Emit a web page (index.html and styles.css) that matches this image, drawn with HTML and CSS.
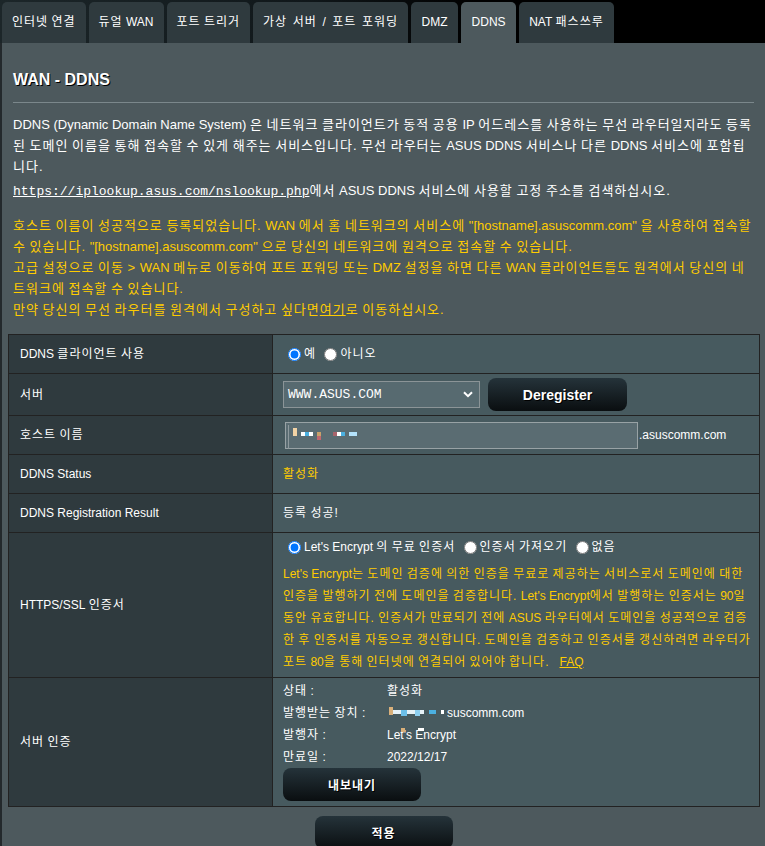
FILE: index.html
```html
<!DOCTYPE html>
<html lang="ko">
<head>
<meta charset="utf-8">
<title>WAN - DDNS</title>
<link rel="stylesheet" href="styles.css">
</head>
<body>
<div class="page">
  <nav class="tabs">
    <div class="tab">인터넷 연결</div>
    <div class="tab">듀얼 <span class="en">WAN</span></div>
    <div class="tab">포트 트리거</div>
    <div class="tab tab-wide">가상 서버 / 포트 포워딩</div>
    <div class="tab en">DMZ</div>
    <div class="tab en active">DDNS</div>
    <div class="tab"><span class="en">NAT</span> 패스쓰루</div>
  </nav>
  <main class="panel">
    <div class="intro">
      <h1 class="title en">WAN - DDNS</h1>
      <div class="split"></div>
      <p class="desc"><span class="en">DDNS (Dynamic Domain Name System)</span> 은 네트워크 클라이언트가 동적 공용 <span class="en">IP</span> 어드레스를 사용하는 무선 라우터일지라도 등록된 도메인 이름을 통해 접속할 수 있게 해주는 서비스입니다. 무선 라우터는 <span class="en">ASUS DDNS</span> 서비스나 다른 <span class="en">DDNS</span> 서비스에 포함됩니다.</p>
      <p class="desc link-line"><a class="mono-link en">https://iplookup.asus.com/nslookup.php</a>에서 <span class="en">ASUS DDNS</span> 서비스에 사용할 고정 주소를 검색하십시오.</p>
      <p class="hint">호스트 이름이 성공적으로 등록되었습니다. <span class="en">WAN</span> 에서 홈 네트워크의 서비스에 <span class="en">"[hostname].asuscomm.com"</span> 을 사용하여 접속할 수 있습니다. <span class="en">"[hostname].asuscomm.com"</span> 으로 당신의 네트워크에 원격으로 접속할 수 있습니다.<br>고급 설정으로 이동 &gt; <span class="en">WAN</span> 메뉴로 이동하여 포트 포워딩 또는 <span class="en">DMZ</span> 설정을 하면 다른 <span class="en">WAN</span> 클라이언트들도 원격에서 당신의 네트워크에 접속할 수 있습니다.<br>만약 당신의 무선 라우터를 원격에서 구성하고 싶다면<a class="u">여기</a>로 이동하십시오.</p>
    </div>

    <div class="form">
      <div class="th"><span class="en">DDNS</span>&nbsp;클라이언트 사용</div>
      <div class="td"><span class="radios"><input type="radio" name="ddns" checked>예 <input type="radio" name="ddns">아니오</span></div>

      <div class="th">서버</div>
      <div class="td">
        <div class="select en"><span>WWW.ASUS.COM</span><svg width="10" height="7" viewBox="0 0 10 7"><path d="M1 1.2 L5 5.2 L9 1.2" fill="none" stroke="#fff" stroke-width="2"/></svg></div>
        <button class="btn btn-dereg">Deregister</button>
      </div>

      <div class="th">호스트 이름</div>
      <div class="td">
        <div class="host">
          <i class="px line"></i>
          <i class="px p1"></i>
          <i class="px p2"></i><i class="px p3"></i><i class="px p4"></i>
          <i class="px p5"></i><i class="px p6"></i>
          <i class="px p7"></i><i class="px p8"></i><i class="px p9"></i>
          <i class="px p10"></i>
        </div><span class="suffix en">.asuscomm.com</span>
      </div>

      <div class="th en">DDNS Status</div>
      <div class="td"><span class="orange">활성화</span></div>

      <div class="th en">DDNS Registration Result</div>
      <div class="td">등록 성공!</div>

      <div class="th"><span class="en">HTTPS/SSL</span>&nbsp;인증서</div>
      <div class="td td-block td-https">
        <div class="radios radio-line"><input type="radio" name="cert" checked><span class="en">Let's Encrypt</span> 의 무료 인증서 <input type="radio" name="cert">인증서 가져오기 <input type="radio" name="cert">없음</div>
        <p class="cert-hint"><span class="en">Let's Encrypt</span>는 도메인 검증에 의한 인증을 무료로 제공하는 서비스로서 도메인에 대한 인증을 발행하기 전에 도메인을 검증합니다. <span class="en">Let's Encrypt</span>에서 발행하는 인증서는 <span class="en">90</span>일 동안 유효합니다. 인증서가 만료되기 전에 <span class="en">ASUS</span> 라우터에서 도메인을 성공적으로 검증한 후 인증서를 자동으로 갱신합니다. 도메인을 검증하고 인증서를 갱신하려면 라우터가 포트 <span class="en">80</span>을 통해 인터넷에 연결되어 있어야 합니다.&nbsp;&nbsp;&nbsp;<a class="u en">FAQ</a></p>
      </div>

      <div class="th">서버 인증</div>
      <div class="td td-block td-cert">
        <div class="cert">
          <span>상태 :</span><span>활성화</span>
          <span>발행받는 장치 :</span><span class="en"><span class="redact"><i class="px c1"></i><i class="px c2"></i><i class="px c3"></i><i class="px c4"></i><i class="px c5"></i><i class="px c6"></i></span>suscomm.com</span>
          <span>발행자 :</span><span class="issuer en">Let's Encrypt<i class="px c7"></i><i class="px c8"></i></span>
          <span>만료일 :</span><span class="en">2022/12/17</span>
        </div>
        <button class="btn btn-ko btn-export">내보내기</button>
      </div>
    </div>

    <div class="apply">
      <button class="btn btn-ko">적용</button>
    </div>
  </main>
</div>
</body>
</html>
```

FILE: styles.css
```css
* { box-sizing: border-box; }

body {
  margin: 0;
  background: #23292c;
  color: #fff;
  font-family: "Liberation Sans", Arial, "Noto Sans CJK KR", sans-serif;
  /* widen CJK glyphs to the reference's full-width hangul */
  letter-spacing: 1px;
  word-spacing: -1px;
}

.en { letter-spacing: 0; word-spacing: 0; }

.page { width: 765px; }

.tabs {
  display: flex;
  gap: 3px;
  height: 43px;
  padding: 2px 0 0 2px;
  background: linear-gradient(90deg, #1c2629 0%, #10171a 40%, #000 62%);
}

.tab {
  height: 41px;
  line-height: 41px;
  padding: 0 10px;
  background: #2f3a3e;
  border-radius: 5px 5px 0 0;
  font-size: 12px;
  white-space: nowrap;
}

.tab.en { padding: 0 10.5px; }
.tab.active { background: #4d595d; }
.tab-wide { word-spacing: 1.25px; }

.panel {
  margin-left: 2px;
  background: #4d595d;
  padding-bottom: 20px;
  min-height: 803px;
}

.intro { padding: 27px 11px 0; }

.title {
  margin: 0;
  font-size: 16px;
  font-weight: bold;
  line-height: 20px;
  text-shadow: 1px 1px 0 #000;
}

.split {
  height: 1px;
  margin-top: 12px;
  background: #7b878b;
}

.desc {
  margin: 11px 0 0;
  font-size: 13px;
  line-height: 21px;
}

.link-line { margin-top: 3px; }

.mono-link {
  font-family: "Liberation Mono", monospace;
  color: #fff;
  text-decoration: underline;
}

.hint {
  margin: 13px 0 0;
  font-size: 13px;
  line-height: 21px;
  color: #ffcc00;
}

.u { text-decoration: underline; }

.form {
  margin: 14px 0 0 6px;
  width: 752px;
  display: grid;
  grid-template-columns: 263px 486px;
  grid-template-rows: 38px 41px 38px 38px 38px auto auto;
  gap: 1px;
  background: #222;
  border: 1px solid #222;
  font-size: 12px;
}

.th {
  background: #2f3a3e;
  padding-left: 11px;
  display: flex;
  align-items: center;
  line-height: 18px;
}

.td {
  background: #475a5f;
  padding: 0 10px;
  display: flex;
  align-items: center;
  line-height: 18px;
}

.td-block { display: block; }
.td-https { padding: 4px 6px 4px 10px; }
.td-cert { padding: 2px 10px 5px; }

.radios input {
  width: 13px;
  height: 13px;
  margin: 0 3px 1px 5px;
  vertical-align: middle;
}

.radio-line { line-height: 20px; }

.cert-hint {
  margin: 6px 0 0;
  line-height: 22px;
  color: #ffcc00;
}

.orange { color: #ffcc00; }

.select {
  width: 197px;
  height: 27px;
  border: 1px solid #8b9497;
  background: #576a70;
  display: flex;
  align-items: center;
  justify-content: space-between;
  padding: 0 6px 0 4px;
  font-family: "Liberation Mono", monospace;
  font-size: 13px;
}

.btn {
  width: 139px;
  height: 33px;
  border: 0;
  border-radius: 8px;
  background: linear-gradient(180deg, #25333a 0%, #0a0e10 100%);
  color: #fff;
  font-family: "Liberation Sans", Arial, "Noto Sans CJK KR", sans-serif;
  font-weight: bold;
  font-size: 14px;
  letter-spacing: 0;
  text-shadow: 1px 1px 0 #000;
  padding: 0;
}

.btn-ko { font-size: 12px; width: 138px; letter-spacing: 1px; }
.btn-dereg { margin-left: 8px; }
.btn-export { display: block; }

.host {
  position: relative;
  margin-left: 2px;
  width: 353px;
  height: 27px;
  border: 1px solid #98a2a5;
  background: #5a6c72;
}

.px { position: absolute; display: block; }
.host .line { left: 2px; top: 2px; width: 1px; height: 24px; background: #8e9a9e; }
.host .p1 { left: 7px; top: 5px; width: 4px; height: 8px; background: #f2d3a5; }
.host .p2 { left: 15px; top: 9px; width: 4px; height: 4px; background: #fff; }
.host .p3 { left: 19px; top: 9px; width: 4px; height: 4px; background: #4bb0e0; }
.host .p4 { left: 23px; top: 9px; width: 4px; height: 4px; background: #fff; }
.host .p5 { left: 31px; top: 9px; width: 4px; height: 4px; background: #c9a06a; }
.host .p6 { left: 31px; top: 13px; width: 4px; height: 4px; background: #c0686e; }
.host .p7 { left: 47px; top: 9px; width: 4px; height: 4px; background: #a8646c; }
.host .p8 { left: 51px; top: 9px; width: 4px; height: 4px; background: #fff; }
.host .p9 { left: 55px; top: 9px; width: 4px; height: 4px; background: #4bb0e0; }
.host .p10 { left: 63px; top: 9px; width: 8px; height: 4px; background: #b4e2fb; }

.suffix { margin-left: 1px; }

.cert {
  display: grid;
  grid-template-columns: 104px auto;
  line-height: 22px;
}

.redact {
  position: relative;
  display: inline-block;
  width: 60px;
  height: 10px;
}

.redact .c1 { left: 2px; top: 0; width: 4px; height: 8px; background: #d9b07a; }
.redact .c2 { left: 6px; top: 3px; width: 31px; height: 4px; background: #e6f2f8; }
.redact .c3 { left: 14px; top: 3px; width: 6px; height: 6px; background: #6cc0ea; }
.redact .c4 { left: 28px; top: 3px; width: 5px; height: 6px; background: #8dcff0; }
.redact .c5 { left: 42px; top: 3px; width: 7px; height: 4px; background: #4bb0e0; }
.redact .c6 { left: 54px; top: 3px; width: 3px; height: 4px; background: #fff; }

.issuer { position: relative; }
.issuer .c7 { left: 14px; top: 4px; width: 4px; height: 4px; background: #d9b07a; }
.issuer .c8 { left: 31px; top: 4px; width: 6px; height: 3px; background: #fff; }

.apply {
  display: flex;
  justify-content: center;
  margin-top: 9px;
}
```
